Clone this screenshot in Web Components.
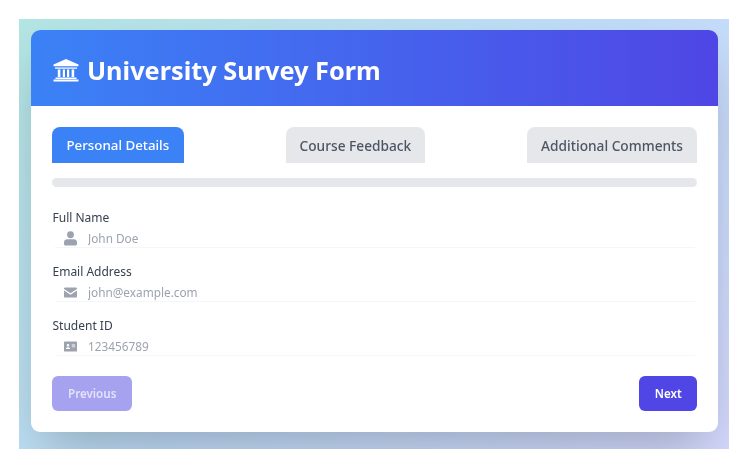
<!DOCTYPE html>
<html lang="en"><head><meta charset="utf-8"><title>University Survey Form</title>
<style>
html,body{margin:0;padding:0;background:#fff;font-family:"Noto Sans","Open Sans",sans-serif}
body{width:750px;height:469px;overflow:hidden}
</style></head><body>
<survey-page>
  <survey-card>
    <survey-header slot="header">University Survey Form</survey-header>
    <survey-tabs>
      <survey-tab active>Personal Details</survey-tab>
      <survey-tab>Course Feedback</survey-tab>
      <survey-tab>Additional Comments</survey-tab>
    </survey-tabs>
    <survey-progress></survey-progress>
    <survey-field label="Full Name" placeholder="John Doe" icon="user"></survey-field>
    <survey-field label="Email Address" placeholder="john@example.com" icon="mail"></survey-field>
    <survey-field label="Student ID" placeholder="123456789" icon="id"></survey-field>
    <survey-actions>
      <survey-button disabled>Previous</survey-button>
      <survey-button>Next</survey-button>
    </survey-actions>
  </survey-card>
</survey-page>
<script>
function def(name, css, html){
  customElements.define(name, class extends HTMLElement{
    constructor(){super();const r=this.attachShadow({mode:'open'});r.innerHTML='<style>'+css+'</style>'+(typeof html==='function'?html(this):html);}
  });
}
def('survey-page',`:host{display:block;box-sizing:border-box;margin:19px 21px 0 19px;width:710px;height:430px;padding:11px 11px 17px 12px;overflow:hidden;background:linear-gradient(135deg,#b3e5e3 0%,#bfdcf8 50%,#d4d9fd 100%)}`,'<slot></slot>');
def('survey-card',`:host{display:block;height:402px;background:#fff;border-radius:9px;box-shadow:0 25px 50px -12px rgba(0,0,0,.25);filter:blur(.35px)}
.clip{height:100%;border-radius:9px;overflow:hidden}
.body{padding:21px 21px 0}`,'<div class="clip"><slot name="header"></slot><div class="body"><slot></slot></div></div>');
def('survey-header',`:host{display:flex;align-items:center;gap:8px;box-sizing:border-box;height:76px;padding:4px 22px 0;background:linear-gradient(90deg,#3b82f6,#4f46e5);color:#fff;font-size:25.300px;font-weight:700;line-height:32px}
svg{width:26px;height:24px;fill:#fff;flex:none}`,
`<svg viewBox="0 0 26 24"><path d="M13 1 25.500 6.600v1.600H.5V6.600z"/><path d="M2 9.400h22v1.400H2z"/><path d="M4.800 11.500h2.600v7.500H4.800zM9.800 11.500h2.200v7.500H9.800zM14 11.500h2.200v7.500H14zM18.600 11.500h2.600v7.500h-2.600z"/><path d="M2.500 19.600h21v1.400h-21zM.5 21.600h25V23.500H.5z"/></svg><span><slot></slot></span>`);
def('survey-tabs',`:host{display:flex;justify-content:space-between}`,'<slot></slot>');
def('survey-tab',`:host{display:block;box-sizing:border-box;height:36px;padding:0 14px;line-height:37px;font-size:13.700px;font-weight:500;color:#4b5563;background:#e5e7eb;border-radius:8px 8px 0 0;white-space:nowrap}
:host([active]){background:#3b82f6;color:#fff;padding:0 14.500px;font-size:13.300px}`,'<slot></slot>');
def('survey-progress',`:host{display:block;height:9px;margin-top:15px;margin-bottom:21px;background:#e5e7eb;border-radius:5px}`,'');
const icons={
 user:'<svg viewBox="0 0 14 16" width="13" height="15"><circle cx="7" cy="4" r="3.700"/><path d="M3.600 8.800h6.800A3.600 3.600 0 0 1 14 12.400v1.900a1.200 1.200 0 0 1-1.200 1.200H1.200A1.200 1.200 0 0 1 0 14.300v-1.900a3.600 3.600 0 0 1 3.600-3.600z"/></svg>',
 mail:'<svg viewBox="0 0 14 11" width="13" height="11"><path d="M1.300 0h11.400A1.300 1.300 0 0 1 14 1.300v.5L7 6.300 0 1.800v-.5A1.300 1.300 0 0 1 1.300 0z"/><path d="M0 3.300 7 7.800l7-4.500v6.400A1.300 1.300 0 0 1 12.700 11H1.300A1.300 1.300 0 0 1 0 9.700z"/></svg>',
 id:'<svg viewBox="0 0 14 11" width="13" height="11"><path fill-rule="evenodd" d="M1 0h12a1 1 0 0 1 1 1v9a1 1 0 0 1-1 1H1a1 1 0 0 1-1-1V1a1 1 0 0 1 1-1zM8.300 3.400v1h3.700v-1zM8.300 5.400v1h3.700v-1zM4.300 2.800a1.400 1.400 0 1 0 0 2.800 1.400 1.400 0 0 0 0-2.800zM2 8.200h4.600c0-1.200-1-1.900-2.300-1.900S2 7 2 8.200z"/></svg>'
};
def('survey-field',`:host{display:block;margin-bottom:14px}
label{display:block;padding:.5px 0 .5px .5px;font-size:12px;line-height:17px;color:#374151;font-weight:400;margin-bottom:3px}
.row{box-sizing:border-box;display:flex;align-items:center;height:19px;padding-top:1px;margin:0 2px 0 3px;border-bottom:1px solid #f5f6f7}
.ic{display:flex;justify-content:center;width:13px;margin-left:9px;margin-right:11px;fill:#9ca3af}
input{flex:1;min-width:0;border:0;outline:0;padding:0;background:none;font:11.800px/17px "Noto Sans","Open Sans",sans-serif;color:#374151}
input::placeholder{color:#9ca3af;opacity:1}`,
 el=>`<label>${el.getAttribute('label')}</label><div class="row"><span class="ic">${icons[el.getAttribute('icon')]}</span><input placeholder="${el.getAttribute('placeholder')}"></div>`);
def('survey-actions',`:host{display:flex;justify-content:space-between;margin-top:20px}`,'<slot></slot>');
def('survey-button',`:host{display:block;box-sizing:border-box;height:35px;padding:0 15.200px 0 16px;line-height:35px;font-size:11.600px;font-weight:600;color:#fff;background:#4f46e5;border-radius:6px}
:host([disabled]){background:#a7a2ef;color:#e4e2fb;padding:0 16px}`,'<slot></slot>');
</script>
</body></html>
